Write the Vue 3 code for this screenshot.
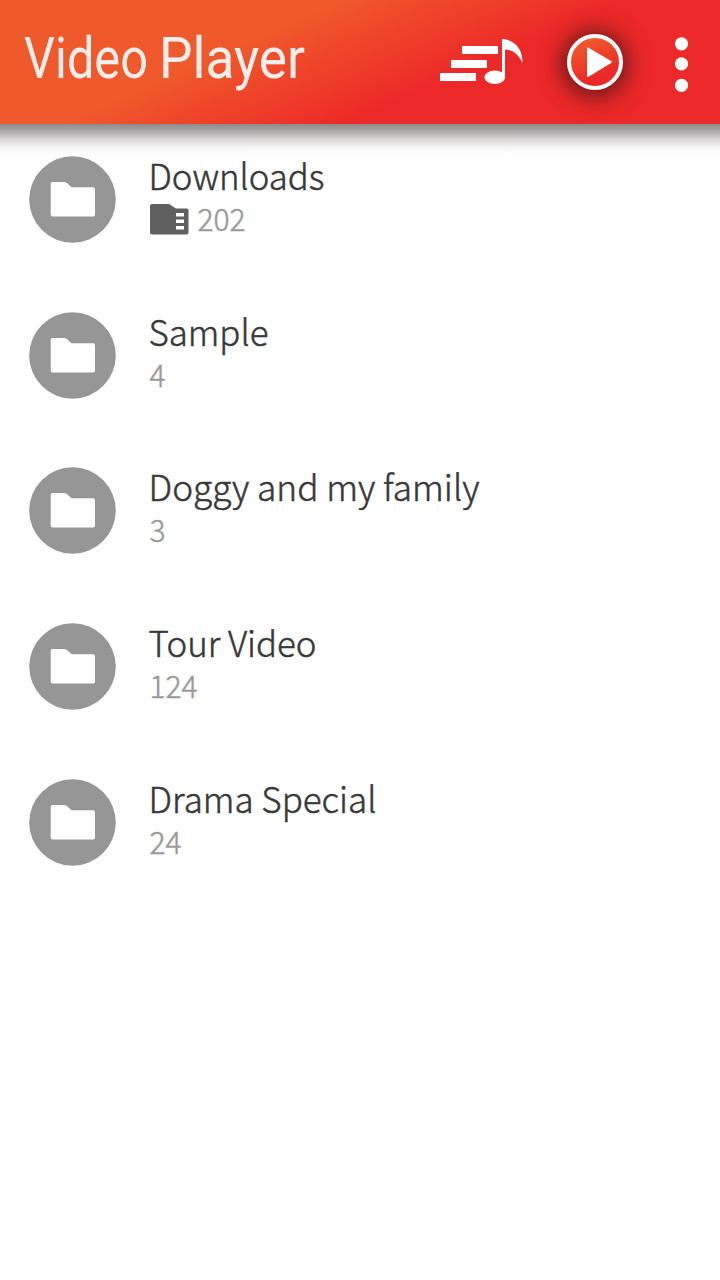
<script setup>
const folders = [
  { name: 'Downloads', count: 202, width: 174, countWidth: 48, card: true },
  { name: 'Sample', count: 4, width: 118, countWidth: 16 },
  { name: 'Doggy and my family', count: 3, width: 329, countWidth: 16 },
  { name: 'Tour Video', count: 124, width: 166, countWidth: 48 },
  { name: 'Drama Special', count: 24, width: 226, countWidth: 32 },
]
</script>

<template>
  <main class="screen">
    <header class="bar">
      <svg class="title" width="300" height="124" viewBox="0 0 300 124">
        <text x="0" y="78" textLength="124" lengthAdjust="spacingAndGlyphs">Video</text>
        <text x="135" y="78" textLength="146" lengthAdjust="spacingAndGlyphs">Player</text>
      </svg>
      <svg class="music" width="84" height="46" viewBox="0 0 84 46" fill="#fff">
        <path d="M22 7H58V15H22zM11 21H47V29H11zM0 34H36V42H0z" />
        <ellipse cx="54.8" cy="38.3" rx="10.3" ry="6.8" />
        <path d="M62 0C72 0 83 8 82.500 24C79 16 73 10.500 65 10.500V38H62z" />
      </svg>
      <span class="play">
        <svg width="56" height="56" viewBox="0 0 56 56">
          <defs>
            <linearGradient id="disc" x1="0.25" y1="0" x2="0.65" y2="1">
              <stop offset="0.1" stop-color="#f0592b" />
              <stop offset="0.8" stop-color="#ec2828" />
            </linearGradient>
          </defs>
          <circle cx="28" cy="28" r="26" fill="url(#disc)" stroke="#fff" stroke-width="4" />
          <path d="M21 14.500L44 28L21 42z" fill="#fff" stroke="#fff" stroke-width="2" stroke-linejoin="round" />
        </svg>
      </span>
      <svg class="more" width="14" height="56" viewBox="0 0 14 56" fill="#fff">
        <circle cx="7.500" cy="6.800" r="6.6" />
        <circle cx="7.500" cy="26.800" r="6.6" />
        <circle cx="7.500" cy="48.300" r="6.6" />
      </svg>
    </header>
    <div class="shade"></div>
    <ul class="list">
      <li v-for="f in folders" :key="f.name" class="row">
        <svg class="badge" width="87" height="87" viewBox="0 0 87 87">
          <circle cx="43.5" cy="43.5" r="43.3" fill="#969696" />
          <path d="M23.500 26H35.500Q37 26 38.500 27.500L42.500 31.300H64Q66 31.300 66 33.300V58.500Q66 60.500 64 60.500H23.500Q21.700 60.500 21.700 58.500V28Q21.700 26 23.500 26z" fill="#fff" />
        </svg>
        <div class="info">
          <svg class="name" width="400" height="44" viewBox="0 0 400 44">
            <text x="-1.500" y="33.500" :textLength="f.width + 2" lengthAdjust="spacingAndGlyphs">{{ f.name }}</text>
          </svg>
          <div class="meta">
            <svg v-if="f.card" class="card" width="39" height="31" viewBox="0 0 39 31">
              <path d="M2 0H18.500Q20 0 22 2L26 4.500H37Q38.500 4.500 38.500 6V28.500Q38.500 30.500 36.500 30.500H2Q0 30.500 0 28.500V2Q0 0 2 0z" fill="#606060" />
              <path d="M26 9H34V12.500H26zM26 15.500H34V19H26zM26 22H34V25.500H26z" fill="#fff" />
            </svg>
            <svg width="100" height="36" viewBox="0 0 100 36">
              <text class="count" x="-0.500" y="26.500" :textLength="f.countWidth" lengthAdjust="spacingAndGlyphs">{{ f.count }}</text>
            </svg>
          </div>
        </div>
      </li>
    </ul>
  </main>
</template>

<style>
body { margin: 0; background: #fff; }
</style>

<style scoped>
.screen {
  width: 720px;
  height: 1280px;
  overflow: hidden;
  background: #fff;
  font-family: "Noto Sans CJK SC", "Noto Sans", sans-serif;
}
.bar {
  height: 124px;
  display: flex;
  align-items: flex-start;
  background: linear-gradient(156deg, #f0592b 34%, #ec2828 63%);
}
.title {
  margin-left: 24px;
  font-family: Roboto, "Liberation Sans", sans-serif;
  font-size: 57.5px;
  font-weight: 400;
  fill: #f7eeec;
}
.music { margin: 39px 0 0 116px; }
.play {
  width: 56px;
  height: 56px;
  margin: 34px 0 0 43px;
  border-radius: 50%;
  box-shadow: 0 2px 22px 5px rgba(60, 20, 20, 0.75);
}
.play svg { display: block; }
.more { margin: 37px 0 0 51px; }
.shade {
  height: 32px;
  background: linear-gradient(#8f8989 0%, #aca9a9 22%, #d8d6d6 48%, #f4f4f4 72%, #fff 95%);
}
.list { margin: 0; padding: 0; list-style: none; }
.row {
  display: flex;
  height: 155.7px;
  padding-left: 29px;
}
.info { margin-left: 34px; }
.name {
  display: block;
  overflow: visible;
  font-size: 35.5px;
  font-weight: 300;
  fill: #383838;
  stroke: #383838;
  stroke-width: 0.5px;
}
.meta { display: flex; align-items: flex-start; gap: 9px; padding-top: 4px; }
.meta svg { display: block; overflow: visible; }
.card { flex: none; }
.count {
  font-size: 31px;
  font-weight: 300;
  fill: #999;
  stroke: #999;
  stroke-width: 0.5px;
}
</style>
